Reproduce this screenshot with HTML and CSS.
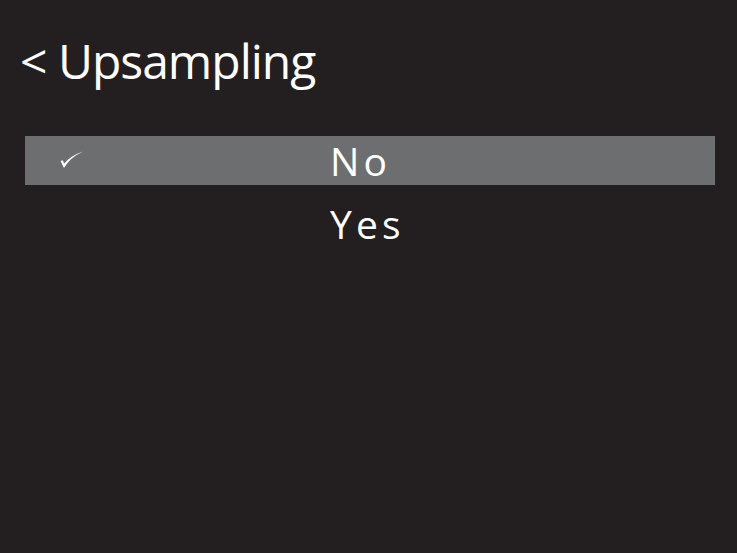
FILE: index.html
```html
<!DOCTYPE html>
<html>
<head>
<meta charset="utf-8">
<link rel="stylesheet" href="styles.css">
</head>
<body>
<div class="screen">
  <h1 class="title">&lt; Upsampling</h1>
  <ul class="list">
    <li class="item selected">
      <svg class="check" width="24" height="18" viewBox="0 0 24 18"><path d="M0.5 10 L4 17 Q10 6.5 23 0.5 Q11 4.5 4.2 12.5 L2.8 9.2 Z" fill="#fff"/></svg>
      <span class="label">No</span>
    </li>
    <li class="item">
      <span class="label">Yes</span>
    </li>
  </ul>
</div>
</body>
</html>
```
FILE: styles.css
```css
html, body { margin: 0; padding: 0; }
body { background: #231f20; width: 737px; height: 553px; overflow: hidden; font-family: "Open Sans", sans-serif; color: #fff; }
.screen { padding: 30px 0 0 0; }
.title { margin: 0 0 0 20px; font-size: 48px; letter-spacing: -1px; font-weight: 400; line-height: 62px; }
.list { list-style: none; margin: 44px 22px 0 25px; padding: 0; }
.item { position: relative; height: 49px; display: flex; align-items: center; padding-left: 305px; margin-bottom: 14px; }
.item.selected { background: #6d6e70; }
.label { font-size: 39px; letter-spacing: 4.2px; line-height: 49px; }
.check { position: absolute; left: 35px; top: 15px; }
```
